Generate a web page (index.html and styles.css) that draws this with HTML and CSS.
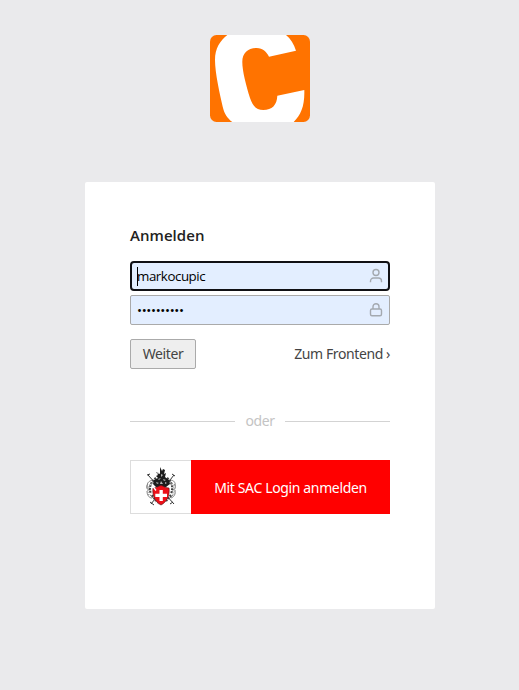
FILE: index.html
```html
<!DOCTYPE html>
<html lang="de">
<head>
<meta charset="utf-8">
<title>Anmelden</title>
<link rel="stylesheet" href="styles.css">
</head>
<body>
<header>
  <svg class="logo" viewBox="0 0 100 87" role="img" aria-label="Contao">
    <rect width="100" height="87" rx="6.5" fill="#ff7300"/>
    <path fill="#fff" d="M17.3 0C10 6 5 13 5 25C5 38 10 60 12.7 71.7C14.3 79 17.5 83.3 22.3 87H83.7C91 79.5 94.8 71 94.3 55L67.3 60.7C67 70 62 75 53.3 75C46 75 42.5 70.5 40 63C36 50 32.3 36 32.3 26.7C32.3 18 38 13 46.7 13C53 13 56.3 16.500 59 21.7L86 15.7C84 9 80.5 3.5 76 0Z"/>
  </svg>
</header>
<main class="card">
  <h1>Anmelden</h1>
  <form>
    <div class="field focused">
      <span class="value"><i class="caret"></i><span class="name">markocupic</span></span>
      <svg class="icon" viewBox="0 0 16 16"><circle cx="8" cy="4.500" r="3"/><path d="M2.500 14.200V13A3 3 0 0 1 5.500 10H10.500A3 3 0 0 1 13.500 13V14.200"/></svg>
    </div>
    <div class="field">
      <span class="value dots">••••••••••</span>
      <svg class="icon" viewBox="0 0 16 16"><rect x="2.500" y="7" width="11" height="6.700" rx="1.500"/><path d="M5 7V4.700A3 3 0 0 1 11 4.700V7"/></svg>
    </div>
    <div class="actions">
      <button type="button">Weiter</button>
      <a class="frontend">Zum Frontend ›</a>
    </div>
  </form>
  <div class="divider"><span>oder</span></div>
  <a class="sac">
    <span class="crest">
      <svg viewBox="0 0 38 46">
        <g fill="none" stroke="#333" stroke-width="1">
          <path d="M5 11L31 40M31 11L8 40M4 11l3-1M29 10l3 2M7 38l4 3M27 40l3-2"/>
          <path stroke="#888" d="M10 16C5 17 3 20 5 24M5 20c-3 3-1 6 2 6M4 27c0 4 2 7 5 7M27 16c4 0 6 3 5 6M31 20c3 3 1 6-2 6M32 26c1 4-1 7-4 8M7 31l3 3M30 31l-4 4"/>
          <path stroke="#444" stroke-width="2.200" stroke-dasharray="2 1" d="M13 14C9 17 5 22 8 30M24 14c4 3 7 8 4 16M9 31l4 6M28 31l-5 6"/>
          <path stroke="#999" stroke-width="1.500" stroke-dasharray="1 1" d="M10 18C6 22 3 25 6 31M27 18c4 4 6 7 3 13M11 36l5 4"/>
        </g>
        <path fill="#1c1c1c" d="M17 3l2 4 1-2 2 1-1 4 2-1-1 4 4 3 1 4-4 3H13l-3-3 1-4 4-2-2-2 2-1-2-3 4 2z"/>
        <path fill="#b5b5b5" d="M15 8l1 2h-2zM18 10l2 1-2 2zM15 15l3-1-2 2zM20 15l3 1-2 1zM13 18l3 1-2 1zM18 17l2 3h-3zM22 18l2 1-2 1z"/>
        <path fill="#ed1019" stroke="#681318" stroke-width=".7" d="M10 24C14 24 16 21.500 18 21.500S22 24 26 24C27 31 24 38 18 41C12 38 9 31 10 24Z"/>
        <path fill="#fff" d="M16.500 26h3.300v3.700H24v3.300h-4.200v4h-3.300v-4h-4.200v-3.300h4.200zM9.500 23l1-1 3 4-1 1z"/>
      </svg>
    </span>
    <span class="label">Mit SAC Login anmelden</span>
  </a>
</main>
</body>
</html>
```
FILE: styles.css
```css
* { box-sizing: border-box; }
body {
  margin: 0;
  min-height: 690px;
  background: #eaeaec;
  color: #222;
  font: 14px/20px "Noto Sans", "Open Sans", sans-serif;
}
header { padding-top: 35px; height: 182px; }
.logo { display: block; width: 100px; height: 87px; margin-left: 210px; }
.card {
  width: 350px;
  height: 427px;
  margin-left: 85px;
  padding: 43px 45px 0;
  background: #fff;
  border-radius: 2px;
}
h1 { margin: 0 0 16px; font: 600 15px/20px "Open Sans", sans-serif; letter-spacing: .05px; }
.field {
  display: flex;
  align-items: center;
  justify-content: space-between;
  height: 30px;
  padding: 0 5px 0 6px;
  border: 1px solid #aaa;
  border-radius: 2px;
  background: #e3eeff;
}
.field.focused {
  margin-bottom: 4px;
  padding: 0 4px 0 5px;
  border: 2px solid #101014;
  border-radius: 4px;
}
.value { display: flex; align-items: center; color: #000; font: 13.333px/20px "Open Sans", sans-serif; }
.name { letter-spacing: -.45px; }
.caret { width: 1px; height: 19px; margin-right: -1px; background: #000; }
.dots { letter-spacing: -.35px; }
.icon { width: 16px; height: 16px; fill: none; stroke: #a4a9b0; stroke-width: 1.4; }
.actions { display: flex; align-items: center; justify-content: space-between; margin-top: 14px; height: 30px; }
button {
  width: 66px;
  height: 30px;
  padding: 0;
  border: 1px solid #aaa;
  border-radius: 2px;
  background: #eee;
  color: #444;
  font: inherit;
  letter-spacing: -.4px;
}
.frontend { color: #444; letter-spacing: -.41px; }
.divider {
  display: flex;
  align-items: center;
  gap: 10px;
  height: 20px;
  margin: 42px 0 29px;
  color: #c4c4c4;
}
.divider::before, .divider::after { content: ""; flex: 1; height: 1px; background: #d3d3d3; }
.divider span { width: 30px; text-align: center; letter-spacing: -.4px; }
.sac { display: flex; height: 54px; }
.crest { width: 61px; border: 1px solid #ddd; border-right: 0; padding: 3px 0 0 12px; }
.crest svg { display: block; width: 38px; height: 46px; }
.label { flex: 1; display: flex; align-items: center; justify-content: center; padding-top: 2px; background: #f00; color: #fff; letter-spacing: -.36px; }
```
